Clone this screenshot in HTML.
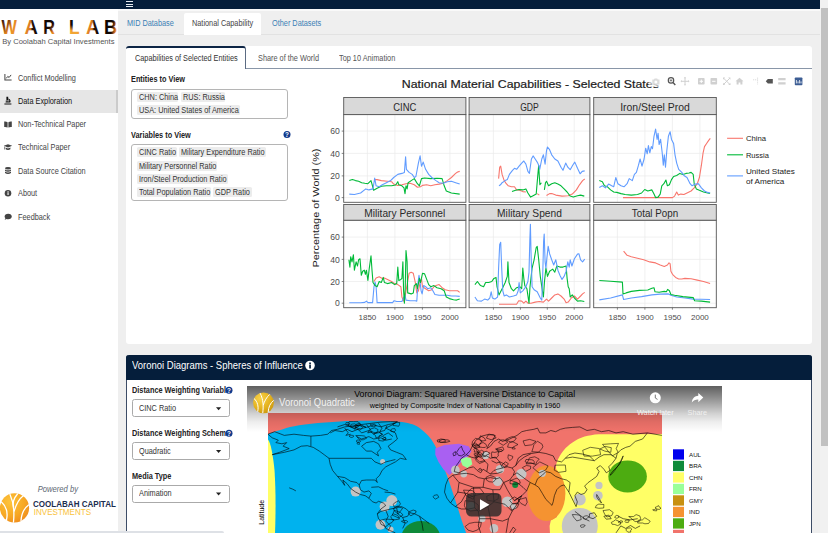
<!DOCTYPE html>
<html><head><meta charset="utf-8"><title>War Lab</title>
<style>
html,body{margin:0;padding:0}
body{width:828px;height:533px;overflow:hidden;position:relative;background:#efefef;font-family:"Liberation Sans",sans-serif;font-size:8.4px;color:#333;line-height:1}
.a{position:absolute}
.t{position:absolute;white-space:nowrap;transform-origin:0 50%;transform:scaleX(.875);line-height:10px;height:10px}
.b{font-weight:bold}
.tag{position:absolute;background:#ececec;border-radius:1.5px;height:10px}
svg{position:absolute;left:0;top:0;overflow:visible}
svg text{font-family:"Liberation Sans",sans-serif}
</style></head><body>

<!-- navbar -->
<div class="a" style="left:0;top:0;width:820px;height:8.6px;background:#051e3b"></div>
<div class="a" style="left:126px;top:1.4px;width:7.2px;height:1.1px;background:#e8edf2"></div>
<div class="a" style="left:126px;top:3.8px;width:7.2px;height:1.1px;background:#e8edf2"></div>
<div class="a" style="left:126px;top:6.1px;width:7.2px;height:1.1px;background:#e8edf2"></div>

<!-- sidebar -->
<div class="a" style="left:0;top:8.6px;width:118px;height:525px;background:#fff"></div>
<div class="a" style="left:0;top:90px;width:118px;height:22.6px;background:#e6e6e6"></div>
<div class="a" style="left:116.2px;top:90px;width:1.8px;height:22.6px;background:#cbcbcb"></div>

<!-- top tab row -->
<div class="a" style="left:118px;top:8.6px;width:702px;height:2.2px;background:#f9f9f9"></div>
<div class="a" style="left:118px;top:34px;width:702px;height:1px;background:#e2e2e2"></div>
<div class="a" style="left:183.5px;top:13.3px;width:77.5px;height:21.7px;background:#fff;border-radius:2px 2px 0 0"></div>

<!-- tab box 1 -->
<div class="a" style="left:126.3px;top:45.5px;width:685.4px;height:298.6px;background:#fff;border-radius:3px"></div>
<!-- tab box 2 -->
<div class="a" style="left:126.3px;top:354.5px;width:685.4px;height:180px;background:#fff;border-radius:3px 3px 0 0;border-left:1px solid #3c4c66;border-right:1px solid #3c4c66;box-sizing:border-box"></div>
<div class="a" style="left:126.3px;top:354.5px;width:685.4px;height:25.8px;background:#051e3b;border-radius:3px 3px 0 0"></div>


<!-- sidebar menu text -->
<div class="t" style="left:17.5px;top:72.5px;color:#444">Conflict Modelling</div>
<div class="t" style="left:17.5px;top:95.8px;color:#111">Data Exploration</div>
<div class="t" style="left:17.5px;top:119px;color:#444">Non-Technical Paper</div>
<div class="t" style="left:17.5px;top:142px;color:#444">Technical Paper</div>
<div class="t" style="left:17.5px;top:165.6px;color:#444">Data Source Citation</div>
<div class="t" style="left:17.5px;top:188.2px;color:#444">About</div>
<div class="t" style="left:17.5px;top:211.8px;color:#444">Feedback</div>

<!-- top tabs text -->
<div class="t" style="left:127px;top:18px;color:#3c7fb5">MID Database</div>
<div class="t" style="left:192px;top:18px;color:#444">National Capability</div>
<div class="t" style="left:271.7px;top:18px;color:#3c7fb5">Other Datasets</div>

<!-- tabbox 1 header -->
<div class="a" style="left:126.3px;top:68px;width:685.4px;height:1px;background:#8996a8"></div>
<div class="a" style="left:126.3px;top:45.5px;width:120.2px;height:23.5px;background:#fff;border-top:2px solid #0d2545;border-right:1.2px solid #5b6b82;border-radius:3px 3px 0 0;box-sizing:border-box"></div>
<div class="t" style="left:135px;top:52.9px;color:#333">Capabilities of Selected Entities</div>
<div class="t" style="left:257.7px;top:52.9px;color:#555">Share of the World</div>
<div class="t" style="left:339px;top:52.9px;color:#555">Top 10 Animation</div>

<!-- controls -->
<div class="t b" style="left:131.4px;top:73.6px;color:#222">Entities to View</div>
<div class="a" style="left:131.4px;top:88.7px;width:156.6px;height:30.1px;border:1px solid #b5b5b5;border-radius:3px;box-sizing:border-box;background:#fff"></div>
<div class="tag" style="left:136.9px;top:91.7px;width:41.6px"></div>
<div class="tag" style="left:181.2px;top:91.7px;width:44.3px"></div>
<div class="tag" style="left:136.9px;top:104.7px;width:102.7px"></div>
<div class="t" style="left:138.5px;top:91.7px">CHN: China</div>
<div class="t" style="left:182.8px;top:91.7px">RUS: Russia</div>
<div class="t" style="left:138.5px;top:104.7px">USA: United States of America</div>

<div class="t b" style="left:131.4px;top:129.6px;color:#222">Variables to View</div>
<div class="a" style="left:131.4px;top:144.1px;width:156.6px;height:56.9px;border:1px solid #b5b5b5;border-radius:3px;box-sizing:border-box;background:#fff"></div>
<div class="tag" style="left:136.9px;top:147.4px;width:39.7px"></div>
<div class="tag" style="left:179.3px;top:147.4px;width:86.4px"></div>
<div class="tag" style="left:136.9px;top:160.8px;width:80.1px"></div>
<div class="tag" style="left:136.9px;top:173.6px;width:90.8px"></div>
<div class="tag" style="left:136.9px;top:187px;width:73.9px"></div>
<div class="tag" style="left:213.3px;top:187px;width:38.3px"></div>
<div class="t" style="left:138.5px;top:147.4px">CINC Ratio</div>
<div class="t" style="left:180.9px;top:147.4px">Military Expenditure Ratio</div>
<div class="t" style="left:138.5px;top:160.8px">Military Personnel Ratio</div>
<div class="t" style="left:138.5px;top:173.6px">Iron/Steel Production Ratio</div>
<div class="t" style="left:138.5px;top:187px">Total Population Ratio</div>
<div class="t" style="left:214.9px;top:187px">GDP Ratio</div>

<!-- voronoi header -->
<div class="a" style="left:132.1px;top:359.3px;white-space:nowrap;color:#fff;font-size:10.1px;line-height:13px;transform-origin:0 50%;transform:scaleX(.94)">Voronoi Diagrams - Spheres of Influence</div>

<!-- voronoi controls -->
<div class="t b" style="left:132.3px;top:385px;color:#222">Distance Weighting Variabl</div>
<div class="a" style="left:132.1px;top:399.4px;width:98.4px;height:18px;border:1px solid #aaa;border-radius:2.5px;box-sizing:border-box;background:#fff"></div>
<div class="t" style="left:139.1px;top:402.8px">CINC Ratio</div>
<div class="t b" style="left:132.3px;top:428px;color:#222">Distance Weighting Schem</div>
<div class="a" style="left:132.1px;top:442.2px;width:98.4px;height:18px;border:1px solid #aaa;border-radius:2.5px;box-sizing:border-box;background:#fff"></div>
<div class="t" style="left:139.1px;top:445.6px">Quadratic</div>
<div class="t b" style="left:132.3px;top:471px;color:#222">Media Type</div>
<div class="a" style="left:132.1px;top:484.7px;width:98.4px;height:18px;border:1px solid #aaa;border-radius:2.5px;box-sizing:border-box;background:#fff"></div>
<div class="t" style="left:139.1px;top:488.1px">Animation</div>

<div class="a" style="left:0;top:531px;width:224px;height:3px;background:#dee1e6;border-top-right-radius:2px"></div>
<!-- scrollbar -->
<div class="a" style="left:820px;top:0;width:8px;height:533px;background:#f1f1f1"></div>
<div class="a" style="left:821.2px;top:8px;width:6.8px;height:438px;background:#c1c1c1"></div>

<svg width="828" height="533" viewBox="0 0 828 533">


<defs>
<linearGradient id="gW" x1="0" y1="0" x2="1" y2="1"><stop offset="0" stop-color="#1a0d05"/><stop offset=".3" stop-color="#7a3a0c"/><stop offset=".55" stop-color="#e88a22"/><stop offset="1" stop-color="#f0a030"/></linearGradient>
<linearGradient id="gA" x1="0" y1="0" x2="1" y2="0"><stop offset="0" stop-color="#e8892a"/><stop offset=".45" stop-color="#d87a20"/><stop offset=".6" stop-color="#2a1206"/><stop offset="1" stop-color="#0a0503"/></linearGradient>
<linearGradient id="gR" x1="0" y1="0" x2=".6" y2="1"><stop offset="0" stop-color="#0a0503"/><stop offset=".6" stop-color="#1a0a04"/><stop offset=".85" stop-color="#d9781e"/><stop offset="1" stop-color="#f0a030"/></linearGradient>
<linearGradient id="gL" x1="0" y1="0" x2="0" y2="1"><stop offset="0" stop-color="#0a0503"/><stop offset=".4" stop-color="#1a0a04"/><stop offset=".65" stop-color="#f0a030"/><stop offset="1" stop-color="#f6b040"/></linearGradient>
<linearGradient id="gB" x1="0" y1="0" x2="1" y2=".3"><stop offset="0" stop-color="#0a0503"/><stop offset=".7" stop-color="#120804"/><stop offset=".9" stop-color="#b05a18"/><stop offset="1" stop-color="#e08a30"/></linearGradient>
<radialGradient id="gLogo" cx=".35" cy=".3" r=".8"><stop offset="0" stop-color="#fdc43c"/><stop offset=".6" stop-color="#f7a823"/><stop offset="1" stop-color="#ef8a1c"/></radialGradient>
<radialGradient id="gLogo2" cx=".35" cy=".3" r=".8"><stop offset="0" stop-color="#f9d34a"/><stop offset=".6" stop-color="#e4b21e"/><stop offset="1" stop-color="#c8960f"/></radialGradient>
<linearGradient id="gYT" x1="0" y1="0" x2="0" y2="1"><stop offset="0" stop-color="#000" stop-opacity=".63"/><stop offset=".24" stop-color="#000" stop-opacity=".455"/><stop offset=".6" stop-color="#000" stop-opacity=".18"/><stop offset=".78" stop-color="#000" stop-opacity=".07"/><stop offset="1" stop-color="#000" stop-opacity="0"/></linearGradient>
<clipPath id="cMap"><rect x="268" y="413" width="394" height="121"/></clipPath>
<clipPath id="cVid"><rect x="247" y="386" width="475" height="148"/></clipPath>
</defs>

<!-- WAR LAB logo -->
<g font-weight="bold" font-size="19.4">
<text transform="translate(1.6,34) scale(.84,1)" fill="url(#gW)">W</text>
<text transform="translate(24.4,34) scale(.95,1)" fill="url(#gA)">A</text>
<text transform="translate(43.2,34) scale(.84,1)" fill="url(#gR)">R</text>
<text transform="translate(68.9,34) scale(.9,1)" fill="url(#gL)">L</text>
<text transform="translate(86,34) scale(.95,1)" fill="url(#gA)">A</text>
<text transform="translate(103.9,34) scale(.94,1)" fill="url(#gB)">B</text>
</g>
<text x="2.2" y="43.9" font-size="7" fill="#555" textLength="112.3" lengthAdjust="spacingAndGlyphs">By Coolabah Capital Investments</text>

<!-- powered by -->
<text x="37.7" y="491.6" font-size="8.4" font-style="italic" fill="#5d6873" textLength="40.3" lengthAdjust="spacingAndGlyphs">Powered by</text>
<circle cx="14.5" cy="507.9" r="14.6" fill="url(#gLogo)"/>
<g fill="none" stroke="#fff" stroke-width="1.3" stroke-linecap="round">
<path d="M13.5,522 C14.5,512 14.5,504 10,494.5"/>
<path d="M14.2,511 C16,505 19,499 23,496"/>
<path d="M6.5,520 C8,513 6,506 1.5,502"/>
<path d="M21,520.5 C21.5,514 24,508.5 28.5,505"/>
<path d="M13.6,507 C12.5,503 14,498 17.5,494"/>
</g>
<text x="33" y="507.4" font-size="9.5" font-weight="bold" fill="#1b2d4f" textLength="82.9" lengthAdjust="spacingAndGlyphs">COOLABAH CAPITAL</text>
<text x="33.8" y="515.3" font-size="8.4" fill="#f9c23a" textLength="57.2" lengthAdjust="spacingAndGlyphs">INVESTMENTS</text>

<!-- sidebar icons -->
<g fill="#444" stroke="none">
<!-- chart-line -->
<path d="M4.4,74 h1 v5.4 h6.2 v1 h-7.2z"/>
<path d="M6.2,78.4 l1.6,-2 l1.3,1.1 l2,-2.6" fill="none" stroke="#444" stroke-width="1"/>
<!-- microscope -->
<path d="M4.4,103.4 h7 v1 h-7z" fill="#111"/>
<path d="M6.4,96.8 h1.8 v3.2 h-1.8z M5.8,100.4 h3 v1 h-3z M8.4,98.6 c2.2,0.4 2.6,2.8 1.8,4 h-4.6 v-0.8 h3.4 c0.6,-0.8 0.2,-2 -0.6,-2.2z" fill="#111"/>
<!-- book-open -->
<path d="M4.2,121.6 c1.2,-0.2 2.4,0 3.4,0.6 v5.4 c-1,-0.6 -2.2,-0.8 -3.4,-0.6z M11.8,121.6 c-1.2,-0.2 -2.4,0 -3.4,0.6 v5.4 c1,-0.6 2.2,-0.8 3.4,-0.6z"/>
<!-- graduation-cap -->
<path d="M8,144.2 l4.2,1.6 l-4.2,1.6 l-4.2,-1.6z M5.6,147.6 l2.4,0.9 l2.4,-0.9 v1.6 c-1.4,0.9 -3.4,0.9 -4.8,0z M4.4,146.4 h0.6 v3 h-0.6z"/>
<!-- database -->
<ellipse cx="8" cy="168.2" rx="3" ry="1.2"/>
<path d="M5,169.4 c1.6,1.2 4.4,1.2 6,0 v1.4 c-1.6,1.2 -4.4,1.2 -6,0z M5,171.6 c1.6,1.2 4.4,1.2 6,0 v1.4 c-1.6,1.2 -4.4,1.2 -6,0z"/>
<!-- info-circle -->
<circle cx="8" cy="193.3" r="3.3"/>
<path d="M7.5,192.6 h1.1 v2.5 h-1.1z M7.5,191.2 h1.1 v1 h-1.1z" fill="#fff"/>
<!-- comment -->
<path d="M8.2,213.8 c2.2,0 3.6,1.2 3.6,2.7 s-1.4,2.7 -3.6,2.7 c-0.6,0 -1.2,-0.1 -1.6,-0.3 c-0.6,0.5 -1.3,0.7 -2,0.7 c0.5,-0.5 0.7,-1 0.8,-1.5 c-0.5,-0.4 -0.8,-1 -0.8,-1.6 c0,-1.5 1.4,-2.7 3.6,-2.7z"/>
</g>

<!-- help icons -->
<g>
<circle cx="287" cy="134.6" r="3.5" fill="#123a8c"/>
<text x="287" y="137" font-size="6.4" font-weight="bold" fill="#fff" text-anchor="middle">?</text>
<circle cx="229" cy="390.2" r="3.5" fill="#123a8c"/>
<text x="229" y="392.6" font-size="6.4" font-weight="bold" fill="#fff" text-anchor="middle">?</text>
<circle cx="229" cy="433.2" r="3.5" fill="#123a8c"/>
<text x="229" y="435.6" font-size="6.4" font-weight="bold" fill="#fff" text-anchor="middle">?</text>
<circle cx="310" cy="365.5" r="4.8" fill="#fff"/>
<path d="M309.2,364.6 h1.7 v3.8 h-1.7z M309.2,362.4 h1.7 v1.5 h-1.7z" fill="#051e3b"/>
</g>
<!-- dropdown arrows -->
<g fill="#222">
<path d="M216,407.3 h5.2 l-2.6,2.9z"/>
<path d="M216,450.1 h5.2 l-2.6,2.9z"/>
<path d="M216,492.6 h5.2 l-2.6,2.9z"/>
</g>



<!-- chart title -->
<text x="401.8" y="87.5" font-size="11.5" fill="#1c1c1c" stroke="#1c1c1c" stroke-width=".2" textLength="257" lengthAdjust="spacingAndGlyphs">National Material Capabilities - Selected States</text>
<text transform="translate(318.6,208) rotate(-90)" text-anchor="middle" font-size="9.5" fill="#222" textLength="119" lengthAdjust="spacingAndGlyphs">Percentage of World (%)</text>
<!-- legend -->
<line x1="727.1" y1="138.3" x2="743" y2="138.3" stroke="#F8766D" stroke-width="1.1"/>
<line x1="727.1" y1="154.8" x2="743" y2="154.8" stroke="#00BA38" stroke-width="1.1"/>
<line x1="727.1" y1="175.9" x2="743" y2="175.9" stroke="#619CFF" stroke-width="1.1"/>
<text x="745.9" y="141.4" font-size="7.6" fill="#222" textLength="20.1" lengthAdjust="spacingAndGlyphs">China</text>
<text x="745.9" y="157.9" font-size="7.6" fill="#222" textLength="23" lengthAdjust="spacingAndGlyphs">Russia</text>
<text x="745.9" y="173.9" font-size="7.6" fill="#222" textLength="49" lengthAdjust="spacingAndGlyphs">United States</text>
<text x="745.9" y="183.5" font-size="7.6" fill="#222" textLength="38.5" lengthAdjust="spacingAndGlyphs">of America</text>
<rect x="343.7" y="114.6" width="122.2" height="87.7" fill="#fff"/>
<line x1="367.4" y1="114.6" x2="367.4" y2="202.3" stroke="#ebebeb" stroke-width="0.7"/>
<line x1="394.9" y1="114.6" x2="394.9" y2="202.3" stroke="#ebebeb" stroke-width="0.7"/>
<line x1="422.4" y1="114.6" x2="422.4" y2="202.3" stroke="#ebebeb" stroke-width="0.7"/>
<line x1="449.9" y1="114.6" x2="449.9" y2="202.3" stroke="#ebebeb" stroke-width="0.7"/>
<line x1="343.7" y1="131.1" x2="465.9" y2="131.1" stroke="#ebebeb" stroke-width="0.7"/>
<line x1="343.7" y1="153.4" x2="465.9" y2="153.4" stroke="#ebebeb" stroke-width="0.7"/>
<line x1="343.7" y1="175.9" x2="465.9" y2="175.9" stroke="#ebebeb" stroke-width="0.7"/>
<line x1="343.7" y1="197.6" x2="465.9" y2="197.6" stroke="#ebebeb" stroke-width="0.7"/>
<polyline fill="none" stroke="#F8766D" stroke-width="1.1" stroke-linejoin="round" points="374.0,179.6 377.1,179.6 381.3,180.6 387.5,181.3 391.6,181.7 393.7,184.1 397.8,185.4 401.9,184.8 406.0,183.7 410.2,183.3 414.3,184.8 417.4,187.2 420.5,186.8 422.5,185.4 426.7,184.8 430.8,185.8 434.9,184.8 439.1,184.1 443.2,183.3 447.3,180.6 451.4,177.5 455.6,173.4 457.6,172.0 459.7,171.4"/>
<polyline fill="none" stroke="#00BA38" stroke-width="1.1" stroke-linejoin="round" points="349.3,180.6 352.4,179.6 355.5,180.6 358.6,181.3 361.7,182.7 364.8,183.3 367.9,183.7 371.0,180.6 372.0,184.1 373.6,190.3 377.1,188.3 381.3,186.2 386.4,185.8 391.6,185.8 395.7,185.0 397.8,181.7 398.8,184.8 401.9,185.8 404.0,187.9 405.0,193.6 406.0,185.8 407.1,188.9 408.1,182.7 411.2,180.6 414.3,178.6 417.4,183.7 419.4,185.8 421.5,178.6 424.6,178.0 430.8,178.6 437.0,178.2 442.1,178.6 444.2,185.8 446.3,191.0 451.4,193.0 459.7,194.1"/>
<polyline fill="none" stroke="#619CFF" stroke-width="1.1" stroke-linejoin="round" points="349.3,194.1 354.4,194.5 360.6,193.0 365.8,188.9 368.9,189.9 373.0,188.9 374.7,178.0 376.1,185.8 379.2,186.8 382.3,184.8 386.4,182.7 390.6,180.6 393.7,177.5 397.8,174.4 401.9,173.4 404.4,172.4 405.6,156.9 406.4,169.3 409.1,172.4 412.2,174.4 414.3,177.5 415.9,176.5 418.4,163.1 420.1,155.9 421.5,166.2 423.2,162.1 425.6,169.3 428.7,174.4 431.8,177.5 436.0,180.6 439.1,182.7 443.2,183.3 447.3,181.7 451.4,181.3 455.6,182.7 459.7,184.1"/>
<rect x="343.7" y="114.6" width="122.2" height="87.7" fill="none" stroke="#555" stroke-width="0.9"/>
<rect x="343.7" y="97.5" width="122.2" height="17.1" fill="#d9d9d9" stroke="#555" stroke-width="0.9"/>
<text x="404.8" y="110.6" text-anchor="middle" font-size="10.2" fill="#2a2a2a" textLength="23.1" lengthAdjust="spacingAndGlyphs">CINC</text>
<line x1="341.7" y1="131.1" x2="343.7" y2="131.1" stroke="#555" stroke-width="0.7"/>
<text x="339.7" y="134.2" text-anchor="end" font-size="8.6" fill="#4d4d4d">60</text>
<line x1="341.7" y1="153.4" x2="343.7" y2="153.4" stroke="#555" stroke-width="0.7"/>
<text x="339.7" y="156.5" text-anchor="end" font-size="8.6" fill="#4d4d4d">40</text>
<line x1="341.7" y1="175.9" x2="343.7" y2="175.9" stroke="#555" stroke-width="0.7"/>
<text x="339.7" y="179.0" text-anchor="end" font-size="8.6" fill="#4d4d4d">20</text>
<line x1="341.7" y1="197.6" x2="343.7" y2="197.6" stroke="#555" stroke-width="0.7"/>
<text x="339.7" y="200.7" text-anchor="end" font-size="8.6" fill="#4d4d4d">0</text>
<rect x="469.1" y="114.6" width="120.8" height="87.7" fill="#fff"/>
<line x1="493.4" y1="114.6" x2="493.4" y2="202.3" stroke="#ebebeb" stroke-width="0.7"/>
<line x1="520.4" y1="114.6" x2="520.4" y2="202.3" stroke="#ebebeb" stroke-width="0.7"/>
<line x1="547.3" y1="114.6" x2="547.3" y2="202.3" stroke="#ebebeb" stroke-width="0.7"/>
<line x1="574.2" y1="114.6" x2="574.2" y2="202.3" stroke="#ebebeb" stroke-width="0.7"/>
<line x1="469.1" y1="131.1" x2="589.9" y2="131.1" stroke="#ebebeb" stroke-width="0.7"/>
<line x1="469.1" y1="153.4" x2="589.9" y2="153.4" stroke="#ebebeb" stroke-width="0.7"/>
<line x1="469.1" y1="175.9" x2="589.9" y2="175.9" stroke="#ebebeb" stroke-width="0.7"/>
<line x1="469.1" y1="197.6" x2="589.9" y2="197.6" stroke="#ebebeb" stroke-width="0.7"/>
<polyline fill="none" stroke="#F8766D" stroke-width="1.1" stroke-linejoin="round" points="498.6,178.6 499.7,167.2 500.7,166.2 502.1,174.4 504.2,180.6 506.3,183.7 508.3,185.8 511.4,186.8 514.5,186.8 516.6,189.9 519.7,190.3 522.8,191.6 525.9,192.0"/>
<polyline fill="none" stroke="#F8766D" stroke-width="1.1" stroke-linejoin="round" points="537.2,193.6 539.3,195.1"/>
<polyline fill="none" stroke="#F8766D" stroke-width="1.1" stroke-linejoin="round" points="546.5,195.5 549.6,193.6 551.7,193.6 555.8,195.1 562.0,196.1 568.2,195.7 572.3,194.1 576.4,189.9 579.5,184.8 582.6,180.6 584.7,179.0"/>
<polyline fill="none" stroke="#00BA38" stroke-width="1.1" stroke-linejoin="round" points="512.0,191.6 515.6,190.3 519.1,189.5 522.8,189.9 525.9,188.9 527.9,193.0 530.6,197.1 533.1,195.7 536.2,194.1 537.6,177.5 538.7,165.2 539.3,176.5 539.9,184.8 541.4,182.7"/>
<polyline fill="none" stroke="#00BA38" stroke-width="1.1" stroke-linejoin="round" points="544.4,189.9 545.5,182.7 546.5,181.3 548.6,185.8 551.7,183.7 554.8,182.7 557.9,184.1 561.0,185.8 564.1,188.9 567.1,192.0 570.2,196.1 573.3,197.1 577.5,195.7 580.6,195.1 584.3,196.1"/>
<polyline fill="none" stroke="#619CFF" stroke-width="1.1" stroke-linejoin="round" points="499.0,185.8 500.5,184.8 502.1,182.7 505.2,180.6 507.3,179.6 509.4,174.4 512.5,170.3 514.5,168.3 516.6,169.3 519.1,166.2 521.7,163.1 523.8,161.0 525.9,164.1 527.9,171.4 529.4,173.4 531.4,159.0 533.1,155.9 535.2,159.0 537.2,162.1 538.7,165.2 539.7,169.3 541.8,159.0 543.4,154.8 545.1,164.1 546.5,150.7 547.5,147.0 549.6,149.7 551.7,154.8 554.8,159.0 557.9,161.0 561.0,167.2 563.0,170.3 565.7,163.1 567.8,167.2 570.2,169.7 572.7,165.2 574.8,162.1 577.5,168.3 580.1,173.8 582.2,171.4 584.7,170.9"/>
<rect x="469.1" y="114.6" width="120.8" height="87.7" fill="none" stroke="#555" stroke-width="0.9"/>
<rect x="469.1" y="97.5" width="120.8" height="17.1" fill="#d9d9d9" stroke="#555" stroke-width="0.9"/>
<text x="529.5" y="110.6" text-anchor="middle" font-size="10.2" fill="#2a2a2a" textLength="18.6" lengthAdjust="spacingAndGlyphs">GDP</text>
<rect x="593.7" y="114.6" width="122.6" height="87.7" fill="#fff"/>
<line x1="617.4" y1="114.6" x2="617.4" y2="202.3" stroke="#ebebeb" stroke-width="0.7"/>
<line x1="644.9" y1="114.6" x2="644.9" y2="202.3" stroke="#ebebeb" stroke-width="0.7"/>
<line x1="672.4" y1="114.6" x2="672.4" y2="202.3" stroke="#ebebeb" stroke-width="0.7"/>
<line x1="699.9" y1="114.6" x2="699.9" y2="202.3" stroke="#ebebeb" stroke-width="0.7"/>
<line x1="593.7" y1="131.1" x2="716.3" y2="131.1" stroke="#ebebeb" stroke-width="0.7"/>
<line x1="593.7" y1="153.4" x2="716.3" y2="153.4" stroke="#ebebeb" stroke-width="0.7"/>
<line x1="593.7" y1="175.9" x2="716.3" y2="175.9" stroke="#ebebeb" stroke-width="0.7"/>
<line x1="593.7" y1="197.6" x2="716.3" y2="197.6" stroke="#ebebeb" stroke-width="0.7"/>
<polyline fill="none" stroke="#F8766D" stroke-width="1.1" stroke-linejoin="round" points="623.0,197.6 672.5,197.6 674.6,196.1 676.7,192.0 678.3,195.1 680.8,194.1 683.9,194.5 687.0,193.0 691.1,191.0 694.2,187.9 697.3,183.7 699.4,177.5 701.4,165.2 703.1,152.8 704.5,146.6 706.6,143.5 708.7,140.4 710.3,138.3"/>
<polyline fill="none" stroke="#00BA38" stroke-width="1.1" stroke-linejoin="round" points="599.3,180.6 602.4,181.7 604.4,185.8 607.5,186.8 610.6,189.9 613.7,192.0 616.8,192.4 621.0,193.6 625.1,194.5 631.3,195.1 637.5,194.5 641.6,193.0 644.7,189.5 647.8,191.0 651.9,189.9 654.0,194.1 655.6,197.6 658.1,197.1 660.2,194.1 661.8,185.8 663.9,183.7 665.9,180.0 667.4,185.8 669.4,184.8 671.5,179.6 673.6,176.5 676.7,175.5 679.8,173.4 682.9,174.4 686.0,173.4 689.1,173.0 691.1,172.4 693.2,174.4 694.2,183.7 696.3,188.9 699.4,190.3 703.5,192.0 707.6,193.0 710.1,193.4"/>
<polyline fill="none" stroke="#619CFF" stroke-width="1.1" stroke-linejoin="round" points="599.3,187.4 602.4,185.8 605.5,187.9 608.6,184.1 611.7,185.8 613.7,186.8 615.8,177.5 617.9,183.7 621.0,185.8 624.0,186.8 627.1,183.7 629.2,178.6 632.3,180.6 634.4,174.4 636.4,172.4 638.5,165.2 640.1,159.0 642.0,166.2 644.1,159.0 645.7,148.2 647.2,153.8 648.4,145.6 649.8,152.8 651.3,146.6 652.5,148.7 654.0,136.3 655.6,129.0 657.1,139.4 658.1,133.2 659.1,144.5 660.6,139.4 662.2,152.8 663.3,165.2 664.3,154.8 665.5,167.2 666.8,150.7 668.4,136.3 670.1,131.7 671.5,139.4 673.6,143.5 675.0,154.8 676.7,163.1 678.7,169.3 681.8,172.4 683.9,175.5 687.0,177.5 690.1,183.7 692.1,185.8 695.2,184.1 698.3,183.7 701.4,187.9 704.5,191.0 707.6,192.4 710.1,193.0"/>
<rect x="593.7" y="114.6" width="122.6" height="87.7" fill="none" stroke="#555" stroke-width="0.9"/>
<rect x="593.7" y="97.5" width="122.6" height="17.1" fill="#d9d9d9" stroke="#555" stroke-width="0.9"/>
<text x="655.0" y="110.6" text-anchor="middle" font-size="10.2" fill="#2a2a2a" textLength="69.6" lengthAdjust="spacingAndGlyphs">Iron/Steel Prod</text>
<rect x="343.7" y="220.2" width="122.2" height="87.5" fill="#fff"/>
<line x1="367.4" y1="220.2" x2="367.4" y2="307.7" stroke="#ebebeb" stroke-width="0.7"/>
<line x1="394.9" y1="220.2" x2="394.9" y2="307.7" stroke="#ebebeb" stroke-width="0.7"/>
<line x1="422.4" y1="220.2" x2="422.4" y2="307.7" stroke="#ebebeb" stroke-width="0.7"/>
<line x1="449.9" y1="220.2" x2="449.9" y2="307.7" stroke="#ebebeb" stroke-width="0.7"/>
<line x1="343.7" y1="237.1" x2="465.9" y2="237.1" stroke="#ebebeb" stroke-width="0.7"/>
<line x1="343.7" y1="259.4" x2="465.9" y2="259.4" stroke="#ebebeb" stroke-width="0.7"/>
<line x1="343.7" y1="281.5" x2="465.9" y2="281.5" stroke="#ebebeb" stroke-width="0.7"/>
<line x1="343.7" y1="303.2" x2="465.9" y2="303.2" stroke="#ebebeb" stroke-width="0.7"/>
<polyline fill="none" stroke="#F8766D" stroke-width="1.1" stroke-linejoin="round" points="374.0,281.5 376.1,278.0 379.2,276.8 382.3,278.4 384.4,278.0 387.5,279.4 391.6,281.5 394.7,283.6 397.8,284.6 400.9,286.7 401.9,297.0 403.6,301.1 405.0,297.0 407.1,284.6 409.1,273.3 411.2,272.2 413.3,273.3 415.3,282.5 416.8,292.9 418.4,290.8 420.1,282.5 421.5,279.4 422.5,286.7 425.6,288.7 428.7,290.8 431.8,289.8 433.9,286.7 436.0,285.6 439.1,284.6 442.1,287.7 445.2,289.8 449.4,290.8 453.5,290.8 457.6,290.8 459.7,292.4"/>
<polyline fill="none" stroke="#619CFF" stroke-width="1.1" stroke-linejoin="round" points="349.3,302.8 360.6,302.8 364.8,302.4 366.4,301.1 367.9,302.6 372.6,302.6 374.0,286.7 375.1,282.1 376.1,286.7 377.1,302.6 392.6,302.6 394.1,300.7 396.7,301.5 401.9,301.5 404.0,297.0 405.0,294.9 406.0,300.1 410.2,300.7 415.3,300.7 416.8,301.1 418.0,282.5 419.0,275.3 420.1,282.5 421.1,290.8 422.1,293.9 423.6,285.6 425.6,286.7 427.7,288.7 430.8,287.7 432.9,290.8 434.9,294.5 439.1,295.3 443.2,295.3 447.3,295.3 451.4,296.0 455.6,296.0 459.7,296.4"/>
<polyline fill="none" stroke="#00BA38" stroke-width="1.1" stroke-linejoin="round" points="348.9,259.8 349.9,267.1 350.7,256.7 352.0,261.9 353.4,254.7 354.4,270.2 356.1,261.9 357.5,266.0 358.6,259.8 360.0,258.8 361.3,275.3 362.7,271.2 364.3,270.2 365.4,274.3 366.4,270.2 367.9,280.5 369.3,268.1 371.0,255.7 372.0,270.2 373.0,282.5 375.1,285.6 377.1,286.7 379.2,281.5 381.3,282.5 383.3,277.4 384.4,282.5 387.5,283.6 391.6,282.5 394.7,284.6 396.7,283.6 397.8,267.1 398.8,280.5 400.9,279.4 401.9,278.4 402.9,261.9 403.6,290.8 404.4,303.2 405.2,288.7 406.0,250.6 407.1,261.9 407.7,292.9 411.2,293.9 413.3,292.9 414.3,285.6 416.4,283.6 417.4,288.7 419.4,278.4 420.5,282.5 422.5,273.3 424.6,273.9 426.7,279.4 428.7,284.6 430.8,286.7 433.9,285.6 437.0,287.7 441.1,288.7 444.2,290.8 446.3,297.0 449.4,298.6 453.5,299.7 456.6,300.1 459.7,299.1"/>
<rect x="343.7" y="220.2" width="122.2" height="87.5" fill="none" stroke="#555" stroke-width="0.9"/>
<rect x="343.7" y="204.5" width="122.2" height="15.7" fill="#d9d9d9" stroke="#555" stroke-width="0.9"/>
<text x="404.8" y="216.9" text-anchor="middle" font-size="10.2" fill="#2a2a2a" textLength="80.9" lengthAdjust="spacingAndGlyphs">Military Personnel</text>
<line x1="367.4" y1="307.7" x2="367.4" y2="309.7" stroke="#555" stroke-width="0.7"/>
<text x="367.4" y="320.0" text-anchor="middle" font-size="8" fill="#4d4d4d">1850</text>
<line x1="394.9" y1="307.7" x2="394.9" y2="309.7" stroke="#555" stroke-width="0.7"/>
<text x="394.9" y="320.0" text-anchor="middle" font-size="8" fill="#4d4d4d">1900</text>
<line x1="422.4" y1="307.7" x2="422.4" y2="309.7" stroke="#555" stroke-width="0.7"/>
<text x="422.4" y="320.0" text-anchor="middle" font-size="8" fill="#4d4d4d">1950</text>
<line x1="449.9" y1="307.7" x2="449.9" y2="309.7" stroke="#555" stroke-width="0.7"/>
<text x="449.9" y="320.0" text-anchor="middle" font-size="8" fill="#4d4d4d">2000</text>
<line x1="341.7" y1="237.1" x2="343.7" y2="237.1" stroke="#555" stroke-width="0.7"/>
<text x="339.7" y="240.2" text-anchor="end" font-size="8.6" fill="#4d4d4d">60</text>
<line x1="341.7" y1="259.4" x2="343.7" y2="259.4" stroke="#555" stroke-width="0.7"/>
<text x="339.7" y="262.5" text-anchor="end" font-size="8.6" fill="#4d4d4d">40</text>
<line x1="341.7" y1="281.5" x2="343.7" y2="281.5" stroke="#555" stroke-width="0.7"/>
<text x="339.7" y="284.6" text-anchor="end" font-size="8.6" fill="#4d4d4d">20</text>
<line x1="341.7" y1="303.2" x2="343.7" y2="303.2" stroke="#555" stroke-width="0.7"/>
<text x="339.7" y="306.3" text-anchor="end" font-size="8.6" fill="#4d4d4d">0</text>
<rect x="469.1" y="220.2" width="120.8" height="87.5" fill="#fff"/>
<line x1="493.4" y1="220.2" x2="493.4" y2="307.7" stroke="#ebebeb" stroke-width="0.7"/>
<line x1="520.4" y1="220.2" x2="520.4" y2="307.7" stroke="#ebebeb" stroke-width="0.7"/>
<line x1="547.3" y1="220.2" x2="547.3" y2="307.7" stroke="#ebebeb" stroke-width="0.7"/>
<line x1="574.2" y1="220.2" x2="574.2" y2="307.7" stroke="#ebebeb" stroke-width="0.7"/>
<line x1="469.1" y1="237.1" x2="589.9" y2="237.1" stroke="#ebebeb" stroke-width="0.7"/>
<line x1="469.1" y1="259.4" x2="589.9" y2="259.4" stroke="#ebebeb" stroke-width="0.7"/>
<line x1="469.1" y1="281.5" x2="589.9" y2="281.5" stroke="#ebebeb" stroke-width="0.7"/>
<line x1="469.1" y1="303.2" x2="589.9" y2="303.2" stroke="#ebebeb" stroke-width="0.7"/>
<polyline fill="none" stroke="#F8766D" stroke-width="1.1" stroke-linejoin="round" points="499.0,304.2 516.6,304.2 518.7,300.7 521.7,301.1 523.8,303.2 525.9,301.1 527.9,303.2 531.0,303.2 535.2,302.1 539.3,301.5 543.4,302.1 546.5,299.1 548.6,301.1 551.7,298.0 554.8,294.9 557.9,293.9 561.0,296.0 564.1,299.1 566.1,302.8 568.2,302.1 571.3,298.0 574.4,296.0 577.5,299.1 580.6,296.0 582.6,293.9 584.7,292.4"/>
<polyline fill="none" stroke="#00BA38" stroke-width="1.1" stroke-linejoin="round" points="474.9,284.6 477.4,281.5 480.5,285.6 483.6,286.7 485.6,282.5 488.7,282.5 491.8,281.5 493.9,278.4 496.0,277.4 497.0,286.7 499.0,294.9 501.1,290.8 503.2,286.7 505.2,282.5 507.3,276.4 507.9,261.9 509.0,282.5 511.4,288.7 513.5,290.8 516.6,287.7 519.7,286.7 521.7,288.7 522.8,268.1 523.8,278.4 524.8,285.6 526.9,288.7 529.0,303.2 530.0,286.7 532.1,268.1 534.1,259.8 536.2,247.5 537.2,246.4 538.7,259.8 540.3,276.4 542.4,290.8 543.4,297.0 544.4,282.5 545.9,268.1 547.5,276.4 549.6,271.2 552.7,269.1 554.8,272.2 556.8,266.0 559.9,267.1 563.0,267.1 566.1,266.0 567.1,278.4 568.2,286.7 569.2,288.7 570.2,297.0 572.3,294.9 574.4,298.0 577.5,301.1 580.6,300.7 584.3,301.5"/>
<polyline fill="none" stroke="#619CFF" stroke-width="1.1" stroke-linejoin="round" points="474.9,297.0 477.4,300.7 481.5,301.1 484.6,299.1 487.7,300.1 489.8,298.0 491.2,291.8 492.4,298.0 494.9,299.1 497.6,297.0 498.6,268.1 499.7,244.4 500.7,242.3 501.7,268.1 502.8,290.8 504.2,296.0 506.3,294.9 509.4,297.0 513.5,296.0 516.6,294.9 518.2,290.8 519.1,282.5 520.3,292.9 522.8,290.8 525.9,286.7 527.9,281.5 529.0,272.2 529.8,241.3 530.4,224.3 531.0,251.6 532.1,286.7 534.1,289.8 537.2,291.8 540.3,298.0 541.8,300.1 542.8,272.2 543.6,241.3 544.2,234.0 545.1,261.9 545.9,268.1 546.9,257.8 548.2,246.4 549.6,253.7 551.7,259.8 553.7,265.0 555.8,259.8 557.9,270.2 559.9,275.3 562.0,279.4 564.1,276.4 566.1,271.2 567.8,261.9 569.2,267.1 570.2,259.8 571.9,266.0 574.4,258.8 577.5,254.1 578.9,253.7 580.6,259.8 582.6,261.9 584.7,259.2"/>
<rect x="469.1" y="220.2" width="120.8" height="87.5" fill="none" stroke="#555" stroke-width="0.9"/>
<rect x="469.1" y="204.5" width="120.8" height="15.7" fill="#d9d9d9" stroke="#555" stroke-width="0.9"/>
<text x="529.5" y="216.9" text-anchor="middle" font-size="10.2" fill="#2a2a2a" textLength="64.8" lengthAdjust="spacingAndGlyphs">Military Spend</text>
<line x1="493.4" y1="307.7" x2="493.4" y2="309.7" stroke="#555" stroke-width="0.7"/>
<text x="493.4" y="320.0" text-anchor="middle" font-size="8" fill="#4d4d4d">1850</text>
<line x1="520.4" y1="307.7" x2="520.4" y2="309.7" stroke="#555" stroke-width="0.7"/>
<text x="520.4" y="320.0" text-anchor="middle" font-size="8" fill="#4d4d4d">1900</text>
<line x1="547.3" y1="307.7" x2="547.3" y2="309.7" stroke="#555" stroke-width="0.7"/>
<text x="547.3" y="320.0" text-anchor="middle" font-size="8" fill="#4d4d4d">1950</text>
<line x1="574.2" y1="307.7" x2="574.2" y2="309.7" stroke="#555" stroke-width="0.7"/>
<text x="574.2" y="320.0" text-anchor="middle" font-size="8" fill="#4d4d4d">2000</text>
<rect x="593.7" y="220.2" width="122.6" height="87.5" fill="#fff"/>
<line x1="617.4" y1="220.2" x2="617.4" y2="307.7" stroke="#ebebeb" stroke-width="0.7"/>
<line x1="644.9" y1="220.2" x2="644.9" y2="307.7" stroke="#ebebeb" stroke-width="0.7"/>
<line x1="672.4" y1="220.2" x2="672.4" y2="307.7" stroke="#ebebeb" stroke-width="0.7"/>
<line x1="699.9" y1="220.2" x2="699.9" y2="307.7" stroke="#ebebeb" stroke-width="0.7"/>
<line x1="593.7" y1="237.1" x2="716.3" y2="237.1" stroke="#ebebeb" stroke-width="0.7"/>
<line x1="593.7" y1="259.4" x2="716.3" y2="259.4" stroke="#ebebeb" stroke-width="0.7"/>
<line x1="593.7" y1="281.5" x2="716.3" y2="281.5" stroke="#ebebeb" stroke-width="0.7"/>
<line x1="593.7" y1="303.2" x2="716.3" y2="303.2" stroke="#ebebeb" stroke-width="0.7"/>
<polyline fill="none" stroke="#F8766D" stroke-width="1.1" stroke-linejoin="round" points="623.6,251.2 627.1,255.3 631.3,256.7 637.5,258.2 643.7,259.8 649.8,261.9 655.6,262.9 660.2,265.0 664.3,266.4 667.4,265.0 669.0,262.9 670.1,263.6 670.9,271.2 672.5,274.3 675.6,277.4 678.7,279.0 681.8,279.0 684.9,278.4 691.1,278.8 697.3,280.1 703.5,281.5 710.1,283.6"/>
<polyline fill="none" stroke="#619CFF" stroke-width="1.1" stroke-linejoin="round" points="599.3,299.9 610.6,298.0 622.4,294.9 623.6,299.5 631.3,298.0 641.6,296.6 651.9,294.9 660.2,294.1 668.4,293.9 670.9,295.3 676.7,297.0 684.9,298.0 693.2,299.1 701.4,299.3 710.1,299.5"/>
<polyline fill="none" stroke="#00BA38" stroke-width="1.1" stroke-linejoin="round" points="599.3,280.5 610.6,281.3 622.4,282.1 623.0,293.9 626.1,292.9 631.3,291.4 639.5,290.4 647.8,290.0 651.9,288.3 654.0,287.7 655.0,291.8 659.1,292.2 664.3,291.4 666.4,291.8 667.6,289.4 669.4,290.8 670.9,294.5 674.6,295.3 682.9,296.6 693.2,297.6 694.6,300.7 701.4,301.1 710.1,302.1"/>
<rect x="593.7" y="220.2" width="122.6" height="87.5" fill="none" stroke="#555" stroke-width="0.9"/>
<rect x="593.7" y="204.5" width="122.6" height="15.7" fill="#d9d9d9" stroke="#555" stroke-width="0.9"/>
<text x="655.0" y="216.9" text-anchor="middle" font-size="10.2" fill="#2a2a2a" textLength="46.4" lengthAdjust="spacingAndGlyphs">Total Popn</text>
<line x1="617.4" y1="307.7" x2="617.4" y2="309.7" stroke="#555" stroke-width="0.7"/>
<text x="617.4" y="320.0" text-anchor="middle" font-size="8" fill="#4d4d4d">1850</text>
<line x1="644.9" y1="307.7" x2="644.9" y2="309.7" stroke="#555" stroke-width="0.7"/>
<text x="644.9" y="320.0" text-anchor="middle" font-size="8" fill="#4d4d4d">1900</text>
<line x1="672.4" y1="307.7" x2="672.4" y2="309.7" stroke="#555" stroke-width="0.7"/>
<text x="672.4" y="320.0" text-anchor="middle" font-size="8" fill="#4d4d4d">1950</text>
<line x1="699.9" y1="307.7" x2="699.9" y2="309.7" stroke="#555" stroke-width="0.7"/>
<text x="699.9" y="320.0" text-anchor="middle" font-size="8" fill="#4d4d4d">2000</text>
<!-- modebar -->
<g>
<rect x="648.5" y="76" width="157" height="11" fill="#fff" opacity=".62"/>
<!-- camera -->
<path d="M652.3,79.4 h1.6 l0.7,-1 h2.6 l0.7,1 h1.6 v5 h-7.2z" fill="#dcdcdc"/><circle cx="655.9" cy="81.9" r="1.5" fill="#fff"/>
<!-- zoom (active) -->
<circle cx="671" cy="80.4" r="2.7" fill="none" stroke="#555" stroke-width="1.2"/><path d="M673,82.6 l2.3,2.3" stroke="#555" stroke-width="1.4" fill="none"/>
<path d="M669.7,80.4 h2.6 M671,79.1 v2.6" stroke="#555" stroke-width=".7"/>
<!-- pan -->
<path d="M685,77.6 v7.4 M681.3,81.3 h7.4" stroke="#d0d0d0" stroke-width="1" fill="none"/>
<path d="M685,76.8 l1.2,1.4 h-2.4z M685,85.8 l1.2,-1.4 h-2.4z M680.5,81.3 l1.4,-1.2 v2.4z M689.5,81.3 l-1.4,-1.2 v2.4z" fill="#d0d0d0"/>
<!-- zoom in -->
<rect x="698" y="78" width="6.6" height="6.6" rx=".8" fill="#d0d0d0"/><path d="M699.6,81.3 h3.4 M701.3,79.6 v3.4" stroke="#fff" stroke-width="1"/>
<!-- zoom out -->
<rect x="710.5" y="78" width="6.6" height="6.6" rx=".8" fill="#d0d0d0"/><path d="M712.1,81.3 h3.4" stroke="#fff" stroke-width="1"/>
<!-- autoscale -->
<path d="M723.6,78.2 l6.2,6.2 M729.8,78.2 l-6.2,6.2" stroke="#d0d0d0" stroke-width="1"/>
<path d="M723,77.6 h2.2 l-2.2,2.2z M730.4,77.6 v2.2 l-2.2,-2.2z M723,85 v-2.2 l2.2,2.2z M730.4,85 h-2.2 l2.2,-2.2z" fill="#d0d0d0"/>
<!-- home -->
<path d="M739.5,77.8 l4,3.4 h-1.1 v3.4 h-2 v-2 h-1.8 v2 h-2 v-3.4 h-1.1z" fill="#d0d0d0"/>
<!-- spikes -->
<path d="M757.6,77.6 v6.8 M753,79.8 h4.6" stroke="#d8d8d8" stroke-width=".9" stroke-dasharray="1.2,.8" fill="none"/>
<!-- closest (active) -->
<path d="M765.8,81.3 l2,-2.3 h5 v4.6 h-5z" fill="#555"/>
<!-- compare -->
<path d="M778.2,78 h7.4 v2.3 h-7.4z M778.2,82.2 h7.4 v2.3 h-7.4z" fill="#d0d0d0"/>
<!-- plotly -->
<rect x="794.8" y="77.4" width="7.6" height="7.8" rx=".8" fill="#3c5d94"/>
<path d="M796.4,80 v3.4 M798,81.4 v2 M799.6,80 v3.4 M801,81.4 v2" stroke="#fff" stroke-width=".8"/>
</g>


<!-- video -->
<g clip-path="url(#cVid)">
<rect x="247" y="386" width="475" height="148" fill="#fff"/>
<rect x="268" y="413" width="394" height="121" fill="#F1736B"/>
<g clip-path="url(#cMap)">
<!-- USA blue -->
<path d="M268,434.3 C272,432.5 280,430 290,427 C300,424.6 320,422.3 340,421.4 C360,420.4 395,420.6 405,422.5 C413,424 417,426 419.6,428 C426,433 431,438 434,443.8 C437,449 439.5,455 441.3,460.7 L448.6,480 L455.8,501.8 L461.9,521 L466.5,534 L268,534 Z" fill="#00B2EE"/>
<!-- yellow strip -->
<path d="M268,439.5 C270.5,442 273,455 274.5,470 C275.8,490 275.8,510 275,534 L268,534 Z" fill="#FFFF66"/>
<!-- China yellow -->
<path d="M662,434 L630,434.2 L599,434.2 C593,434.6 589,435.4 584.6,436.6 C580,438 576,440 572.5,442.6 C569,445 566,447.5 564,449.9 C562,452.5 560.5,454.5 559.2,457.1 C557.5,460 556.6,463 556,465.6 L557,517 L550.8,520.6 L549.6,526 L550,534 L662,534 Z" fill="#FFFF66"/>
<!-- India orange -->
<ellipse cx="546.4" cy="493.3" rx="19" ry="27.8" fill="#F59331"/>
<!-- Japan green -->
<ellipse cx="627.6" cy="476.4" rx="19.3" ry="16" fill="#4DAC11"/>
<!-- Brazil green -->
<ellipse cx="420.8" cy="537" rx="19.3" ry="16" fill="#0E8A3A"/>
<!-- purple UK -->
<polygon points="435.3,448.6 444.5,445 459,443.8 468.6,446.2 471.5,451 468.6,455.9 463.8,459.5 459,464.3 454.2,470.4 449.3,475.2 443.3,469.2 438.5,462 435.3,454.7" fill="#A960F2"/>
<polygon points="460.2,459.5 466.2,457.1 471,458.3 472.3,464.3 467.4,468 462.6,465.6" fill="#99FF99"/>
<circle cx="515.2" cy="485" r="3" fill="#0E8A3A"/>
<circle cx="455.4" cy="469.9" r="4.3" fill="#c4c4c4"/>
<circle cx="463.8" cy="474" r="3.4" fill="#c4c4c4"/>
<circle cx="485.6" cy="455.4" r="3.6" fill="#c4c4c4"/>
<circle cx="500" cy="469.2" r="4.3" fill="#c4c4c4"/>
<circle cx="497.6" cy="481.3" r="4.8" fill="#c4c4c4"/>
<circle cx="521.3" cy="474" r="5.3" fill="#c4c4c4"/>
<circle cx="542.3" cy="473.3" r="3.6" fill="#c4c4c4"/>
<circle cx="507.3" cy="501.8" r="5.3" fill="#c4c4c4"/>
<circle cx="579.8" cy="526" r="18" fill="#c4c4c4"/>
<circle cx="579.8" cy="499.4" r="6" fill="#c4c4c4"/>
<circle cx="597.9" cy="495.7" r="4.8" fill="#c4c4c4"/>
<circle cx="599" cy="485.4" r="3.6" fill="#c4c4c4"/>
<circle cx="482" cy="518.7" r="3.6" fill="#c4c4c4"/>
<circle cx="494" cy="528.4" r="4.3" fill="#c4c4c4"/>
<circle cx="513.3" cy="506.6" r="2.9" fill="#c4c4c4"/>
<circle cx="355.6" cy="491.6" r="5" fill="#c4c4c4"/>
<circle cx="391.8" cy="500.6" r="5.5" fill="#c4c4c4"/>
<circle cx="384.6" cy="506.6" r="5" fill="#c4c4c4"/>
<circle cx="380.5" cy="524.7" r="5" fill="#c4c4c4"/>
<circle cx="382.6" cy="461.4" r="2.5" fill="#c4c4c4"/>
<circle cx="390.6" cy="529.6" r="3" fill="#c4c4c4"/>
<circle cx="471" cy="506" r="4" fill="#c4c4c4"/>
<polyline fill="none" stroke="#000" stroke-width="0.6" stroke-linejoin="round" points="267.9,434.2 272.2,437.8 278.3,440.2 275.9,442.6 281.9,443.8 286.7,442.6 283.1,446.2 289.2,448.6 279.5,452.3 272.2,454.7 284.3,452.3 294.0,449.9 301.2,446.2 307.3,445.7 313.3,447.4 319.3,451.1 324.2,454.7 329.0,458.3 330.2,464.3 332.6,470.4 337.5,476.4 341.8,481.3 344.7,485.4 342.8,480.0 347.1,483.7 350.7,488.5 355.6,492.1 360.4,494.5 365.2,495.7 368.9,498.2 372.5,501.8 376.1,503.0 378.5,501.3 383.4,503.0 385.8,505.4 380.9,509.0 377.3,513.9 378.5,518.7 383.4,523.5 385.8,528.4 390.6,530.8 395.4,532.9"/>
<polyline fill="none" stroke="#000" stroke-width="0.6" stroke-linejoin="round" points="267.9,434.2 274.7,431.7 284.3,435.4 294.0,434.2 303.6,435.4 310.9,436.1 320.6,435.4 327.8,434.2 331.4,430.5 337.5,429.3 344.7,426.9 354.4,425.7 361.6,424.5 371.3,423.3 380.9,422.1 390.6,421.6 397.4,421.6 393.0,424.5 385.8,428.1 390.6,430.5 395.4,432.9 397.4,439.0 393.0,442.6 388.2,446.2 390.6,449.9 396.6,452.3 402.7,454.7 406.3,459.5 400.3,458.3 395.4,461.9 390.6,464.3 385.8,466.8 382.1,470.4 379.7,475.2 376.1,478.8 377.3,482.5 374.9,480.0 371.3,480.0 366.4,480.0 361.6,480.5 359.2,484.9 360.4,489.7 364.0,492.1 368.9,490.9 371.3,493.3 368.9,498.2"/>
<polyline fill="none" stroke="#000" stroke-width="0.6" stroke-linejoin="round" points="361.6,446.2 366.4,442.6 373.7,441.4 378.5,443.8 380.9,448.6 377.3,452.3 378.5,455.9 374.9,453.5 371.3,451.1 366.4,451.1 361.6,446.2"/>
<polyline fill="none" stroke="#000" stroke-width="0.6" stroke-linejoin="round" points="330.2,432.9 335.0,430.5 342.3,431.7 347.1,429.3 352.0,431.7 358.0,429.3 361.6,432.9 368.9,430.5 373.7,434.2 378.5,431.7 383.4,435.4 388.2,432.9 393.0,436.6"/>
<polyline fill="none" stroke="#000" stroke-width="0.6" stroke-linejoin="round" points="337.5,426.9 344.7,424.5 352.0,426.9 359.2,425.0 366.4,427.4 373.7,425.0 380.9,426.9 388.2,424.5 395.4,423.3"/>
<polyline fill="none" stroke="#000" stroke-width="0.6" stroke-linejoin="round" points="356.8,436.6 361.6,439.0 368.9,436.6 373.7,439.0 380.9,437.8 385.8,440.2 391.8,439.0"/>
<polyline fill="none" stroke="#000" stroke-width="0.6" stroke-linejoin="round" points="344.7,428.1 348.3,432.9 345.9,435.4 350.7,434.2"/>
<polyline fill="none" stroke="#000" stroke-width="0.6" stroke-linejoin="round" points="366.4,424.5 370.1,429.3 367.7,432.9 372.5,431.7"/>
<polyline fill="none" stroke="#000" stroke-width="0.6" stroke-linejoin="round" points="378.5,423.3 382.1,428.1 379.7,431.7 384.6,430.5 387.0,425.7"/>
<polyline fill="none" stroke="#000" stroke-width="0.6" stroke-linejoin="round" points="310.9,436.1 310.9,446.2"/>
<polyline fill="none" stroke="#000" stroke-width="0.6" stroke-linejoin="round" points="329.0,458.3 371.3,458.3 374.9,461.9 380.9,464.3 385.8,461.9 390.6,460.7 395.4,459.5"/>
<polyline fill="none" stroke="#000" stroke-width="0.6" stroke-linejoin="round" points="337.5,476.4 344.7,477.6 350.7,481.3 356.8,482.5 359.2,484.9"/>
<polyline fill="none" stroke="#000" stroke-width="0.6" stroke-linejoin="round" points="371.3,487.3 378.5,486.8 383.4,489.2 388.2,490.9"/>
<polyline fill="none" stroke="#000" stroke-width="0.6" stroke-linejoin="round" points="384.6,492.1 390.6,492.6 395.4,494.1"/>
<polyline fill="none" stroke="#000" stroke-width="0.6" stroke-linejoin="round" points="377.3,513.9 380.9,511.4 385.8,510.2 390.6,509.0 396.6,507.8 401.5,506.6 406.3,509.0 409.9,512.7 414.8,513.9 419.6,516.3 424.4,519.9 429.3,523.5"/>
<polyline fill="none" stroke="#000" stroke-width="0.6" stroke-linejoin="round" points="385.8,510.2 388.2,516.3 385.8,521.1 390.6,525.9 388.2,530.8"/>
<polyline fill="none" stroke="#000" stroke-width="0.6" stroke-linejoin="round" points="396.6,507.8 397.9,513.9 402.7,517.5 407.5,516.3 409.9,512.7"/>
<polyline fill="none" stroke="#000" stroke-width="0.6" stroke-linejoin="round" points="402.7,517.5 405.1,523.5 402.7,528.4"/>
<polyline fill="none" stroke="#000" stroke-width="0.6" stroke-linejoin="round" points="419.6,516.3 422.0,523.5 423.2,530.8"/>
<polyline fill="none" stroke="#000" stroke-width="0.6" stroke-linejoin="round" points="438.9,440.9 442.5,439.5 448.6,440.0 449.8,441.4 445.0,442.6 440.1,442.1 438.9,440.9"/>
<polyline fill="none" stroke="#000" stroke-width="0.6" stroke-linejoin="round" points="289.2,487.8 292.8,489.2 295.9,490.9"/>
<polyline fill="none" stroke="#000" stroke-width="0.6" stroke-linejoin="round" points="472.3,446.2 475.9,440.2 481.9,436.1 489.2,434.2 495.2,435.4 492.8,440.2 489.2,443.8 486.8,448.6 490.4,446.2 494.0,441.4 498.8,439.0 502.5,441.4 509.7,439.0 517.0,435.4 521.8,431.7 526.6,430.5 533.9,429.3 537.5,428.1 539.9,432.9 545.9,432.9 550.8,430.5 555.6,431.7 560.4,429.3 565.3,428.1 572.5,427.4 579.8,426.9 587.0,430.5 594.3,429.3 601.5,431.7 608.7,430.5 616.0,432.9 623.2,431.7 632.9,434.2 647.4,432.9 661.9,435.4"/>
<polyline fill="none" stroke="#000" stroke-width="0.6" stroke-linejoin="round" points="472.3,446.2 469.9,451.1 466.2,454.7 461.4,458.3 459.0,461.9 455.4,466.8 454.2,471.6 459.0,472.8 463.8,470.4 468.6,468.0 473.5,466.8 477.1,470.4 480.7,472.8 483.1,469.2 486.8,471.6 490.4,474.0 494.0,470.4 497.6,469.2 502.5,468.0 507.3,466.8 512.1,468.0 515.7,465.6"/>
<polyline fill="none" stroke="#000" stroke-width="0.6" stroke-linejoin="round" points="448.1,478.8 452.9,475.2 459.0,474.0 466.2,473.3 473.5,474.7 478.3,477.6 484.3,478.8 490.4,477.6 496.4,478.8 500.0,477.6 503.7,482.5 507.3,489.7 510.9,495.7 514.5,500.6 518.2,498.2 521.8,495.7"/>
<polyline fill="none" stroke="#000" stroke-width="0.6" stroke-linejoin="round" points="448.1,478.8 445.7,484.9 444.5,492.1 446.9,498.2 450.5,503.0 455.4,506.6 461.4,509.0 468.6,509.0 474.7,507.8 478.3,511.4 479.5,518.7 478.3,525.9 480.7,532.9"/>
<polyline fill="none" stroke="#000" stroke-width="0.6" stroke-linejoin="round" points="521.8,495.7 517.0,504.2 512.1,511.4 508.5,518.7 507.3,525.9 506.1,532.9"/>
<polyline fill="none" stroke="#000" stroke-width="0.6" stroke-linejoin="round" points="452.9,475.2 459.0,482.5 457.8,492.1 450.5,503.0"/>
<polyline fill="none" stroke="#000" stroke-width="0.6" stroke-linejoin="round" points="459.0,482.5 473.5,487.3 483.1,487.3 484.3,478.8"/>
<polyline fill="none" stroke="#000" stroke-width="0.6" stroke-linejoin="round" points="473.5,487.3 474.7,507.8"/>
<polyline fill="none" stroke="#000" stroke-width="0.6" stroke-linejoin="round" points="483.1,487.3 492.8,489.7 500.0,489.7 503.7,482.5"/>
<polyline fill="none" stroke="#000" stroke-width="0.6" stroke-linejoin="round" points="492.8,489.7 494.0,501.8 488.0,506.6 478.3,511.4"/>
<polyline fill="none" stroke="#000" stroke-width="0.6" stroke-linejoin="round" points="494.0,501.8 504.9,504.2 512.1,511.4"/>
<polyline fill="none" stroke="#000" stroke-width="0.6" stroke-linejoin="round" points="488.0,506.6 490.4,518.7 479.5,518.7"/>
<polyline fill="none" stroke="#000" stroke-width="0.6" stroke-linejoin="round" points="490.4,518.7 502.5,521.1 508.5,518.7"/>
<polyline fill="none" stroke="#000" stroke-width="0.6" stroke-linejoin="round" points="490.4,518.7 492.8,532.9"/>
<polyline fill="none" stroke="#000" stroke-width="0.6" stroke-linejoin="round" points="457.8,492.1 466.2,493.3 473.5,497.0"/>
<polyline fill="none" stroke="#000" stroke-width="0.6" stroke-linejoin="round" points="455.4,506.6 461.4,501.8 466.2,493.3"/>
<polyline fill="none" stroke="#000" stroke-width="0.6" stroke-linejoin="round" points="503.7,482.5 509.7,480.0 517.0,482.5 523.0,487.3 526.6,490.9 521.8,495.7 514.5,500.6"/>
<polyline fill="none" stroke="#000" stroke-width="0.6" stroke-linejoin="round" points="509.7,480.0 513.3,475.2 517.0,472.8 521.8,476.4 526.6,480.0 530.2,482.5 526.6,490.9"/>
<polyline fill="none" stroke="#000" stroke-width="0.6" stroke-linejoin="round" points="490.4,474.0 497.6,473.3 502.5,471.6"/>
<polyline fill="none" stroke="#000" stroke-width="0.6" stroke-linejoin="round" points="512.1,468.0 514.5,471.6 513.3,475.2"/>
<polyline fill="none" stroke="#000" stroke-width="0.6" stroke-linejoin="round" points="530.2,482.5 535.1,484.9 538.7,487.3 542.3,493.3 545.9,499.4 549.6,503.0 552.0,505.4 553.2,501.8 554.4,495.7 556.8,489.7 560.4,486.1 564.1,484.9 566.5,488.5 568.9,492.1"/>
<polyline fill="none" stroke="#000" stroke-width="0.6" stroke-linejoin="round" points="568.9,492.1 571.3,497.0 573.7,501.8 576.1,506.6 577.3,501.8 574.9,495.7 577.3,492.1 581.0,494.5 584.6,493.3 587.0,489.7 584.6,486.1 588.2,482.5 591.8,480.0 596.7,476.4 599.1,471.6 596.7,468.0 600.3,465.6 603.9,469.2 606.3,472.8 610.0,470.4 608.7,466.8 612.4,463.1 616.0,458.3 617.2,453.5 620.8,449.9 625.7,447.4 630.0,446.2 635.3,441.4 642.6,439.0 647.4,432.9"/>
<polyline fill="none" stroke="#000" stroke-width="0.6" stroke-linejoin="round" points="515.7,465.6 519.4,460.7 524.2,457.1 531.4,453.5 538.7,452.3 545.9,453.5 553.2,455.9 555.6,460.7 561.6,461.9 565.3,458.3 572.5,457.1 579.8,458.3 587.0,459.5 594.3,460.7 599.1,457.1 603.9,454.7 611.2,454.7 616.0,458.3"/>
<polyline fill="none" stroke="#000" stroke-width="0.6" stroke-linejoin="round" points="565.3,458.3 568.9,454.7 574.9,453.0 582.2,454.0 589.4,455.9 594.3,460.7"/>
<polyline fill="none" stroke="#000" stroke-width="0.6" stroke-linejoin="round" points="535.1,484.9 537.5,478.8 542.3,475.2 545.9,471.6 550.8,472.8 555.6,476.4 561.6,478.8 566.5,480.0 570.1,482.5 568.9,492.1"/>
<polyline fill="none" stroke="#000" stroke-width="0.6" stroke-linejoin="round" points="515.7,465.6 518.2,458.3 523.0,454.7 531.4,453.0"/>
<polyline fill="none" stroke="#000" stroke-width="0.6" stroke-linejoin="round" points="478.3,453.5 481.9,457.1 486.8,455.9 490.4,458.3 495.2,457.1 498.8,460.7 502.5,468.0"/>
<polyline fill="none" stroke="#000" stroke-width="0.6" stroke-linejoin="round" points="475.9,458.3 479.5,461.9 484.3,460.7 488.0,464.3 486.8,471.6"/>
<polyline fill="none" stroke="#000" stroke-width="0.6" stroke-linejoin="round" points="466.2,454.7 471.1,457.1 475.9,458.3 478.3,453.5 475.9,448.6 472.3,446.2"/>
<polyline fill="none" stroke="#000" stroke-width="0.6" stroke-linejoin="round" points="491.6,460.7 496.4,463.1 500.0,461.9 504.9,464.3 507.3,466.8"/>
<polyline fill="none" stroke="#000" stroke-width="0.6" stroke-linejoin="round" points="610.0,475.2 612.4,471.6 616.0,468.0 619.6,464.3 622.0,459.5 623.2,455.9 620.8,460.7 617.9,466.0 614.8,470.4 611.2,474.7 610.0,475.2"/>
<polyline fill="none" stroke="#000" stroke-width="0.6" stroke-linejoin="round" points="596.7,494.5 599.1,498.2 601.5,503.0 599.1,500.6 596.7,497.0 596.7,494.5"/>
<polyline fill="none" stroke="#000" stroke-width="0.6" stroke-linejoin="round" points="574.9,511.4 579.8,515.1 584.6,518.7 589.4,521.1"/>
<polyline fill="none" stroke="#000" stroke-width="0.6" stroke-linejoin="round" points="589.4,513.9 594.3,512.7 596.7,516.3 593.0,518.7 589.4,517.5 589.4,513.9"/>
<polyline fill="none" stroke="#000" stroke-width="0.6" stroke-linejoin="round" points="603.9,516.3 608.7,515.1 611.2,518.7 606.3,519.2 603.9,516.3"/>
<polyline fill="none" stroke="#000" stroke-width="0.6" stroke-linejoin="round" points="618.4,516.3 623.2,518.7 630.0,519.9 637.7,518.7"/>
<polyline fill="none" stroke="#000" stroke-width="0.6" stroke-linejoin="round" points="616.0,532.9 620.8,525.9 625.7,528.4 630.5,525.5 635.3,528.4 640.1,525.9"/>
<polyline fill="none" stroke="#000" stroke-width="0.6" stroke-linejoin="round" points="437.2,440.2 440.9,439.0 444.5,439.5 445.7,441.4 441.6,442.4 437.7,441.9 437.2,440.2"/>
<polyline fill="none" stroke="#000" stroke-width="0.6" stroke-linejoin="round" points="456.6,452.3 459.0,448.6 461.4,446.2 462.6,449.9 465.0,453.5 461.4,455.9 458.5,455.4 456.6,452.3"/>
<polyline fill="none" stroke="#000" stroke-width="0.6" stroke-linejoin="round" points="452.9,453.5 455.4,451.5 456.1,454.7 453.7,455.9 452.9,453.5"/>
<polyline fill="none" stroke="#000" stroke-width="0.6" stroke-linejoin="round" points="509.7,532.9 513.3,527.1 515.7,529.6 513.3,532.9"/><polyline fill="none" stroke="#000" stroke-width="0.55" stroke-linejoin="round" points="354.6,423.8 358.1,425.7 354.5,429.0 350.5,426.3 351.4,424.2 354.6,423.8"/>
<polyline fill="none" stroke="#000" stroke-width="0.55" stroke-linejoin="round" points="360.8,425.9 362.5,427.6 360.3,430.0 354.6,428.8 356.6,425.4 360.8,425.9"/>
<polyline fill="none" stroke="#000" stroke-width="0.55" stroke-linejoin="round" points="357.9,444.2 357.0,443.7 357.1,442.8 358.8,442.1 359.4,443.3 359.6,444.3 357.9,444.2"/>
<polyline fill="none" stroke="#000" stroke-width="0.55" stroke-linejoin="round" points="370.1,429.1 374.5,427.8 378.1,429.6 376.7,432.8 371.6,432.0 370.1,429.1"/>
<polyline fill="none" stroke="#000" stroke-width="0.55" stroke-linejoin="round" points="392.3,428.8 394.8,428.6 395.6,430.3 394.1,432.0 390.8,431.4 390.8,429.7 392.3,428.8"/>
<polyline fill="none" stroke="#000" stroke-width="0.55" stroke-linejoin="round" points="398.6,426.3 396.1,425.8 393.1,425.5 393.0,423.3 396.1,422.4 399.7,422.5 399.5,424.7 398.6,426.3"/>
<polyline fill="none" stroke="#000" stroke-width="0.55" stroke-linejoin="round" points="380.2,435.7 379.0,436.9 375.9,437.8 375.6,435.6 373.4,433.8 376.7,433.1 379.7,432.6 382.4,434.1 380.2,435.7"/>
<polyline fill="none" stroke="#000" stroke-width="0.55" stroke-linejoin="round" points="366.6,438.2 363.3,439.8 360.1,439.8 358.3,438.4 355.8,435.5 361.1,435.6 364.4,436.0 366.6,438.2"/>
<polyline fill="none" stroke="#000" stroke-width="0.55" stroke-linejoin="round" points="356.5,441.7 356.5,441.0 356.7,440.3 358.1,439.9 359.7,440.3 360.6,441.5 359.1,442.3 357.5,442.2 356.5,441.7"/>
<polyline fill="none" stroke="#000" stroke-width="0.55" stroke-linejoin="round" points="350.2,424.0 347.9,424.7 346.2,424.7 345.7,423.8 346.2,422.5 348.6,422.6 350.2,424.0"/>
<polyline fill="none" stroke="#000" stroke-width="0.55" stroke-linejoin="round" points="349.4,421.5 353.5,421.6 358.1,421.7 360.5,424.4 358.0,427.0 354.4,428.1 350.9,427.4 348.7,426.0 348.0,423.9 349.4,421.5"/>
<polyline fill="none" stroke="#000" stroke-width="0.55" stroke-linejoin="round" points="361.0,428.8 357.6,428.3 355.7,427.2 354.6,425.6 356.5,424.2 359.6,423.1 361.3,425.1 366.0,427.3 361.0,428.8"/>
<polyline fill="none" stroke="#000" stroke-width="0.55" stroke-linejoin="round" points="370.4,424.3 372.5,424.2 374.6,424.2 376.3,425.7 373.8,426.7 371.6,426.5 370.8,425.6 370.4,424.3"/>
<polyline fill="none" stroke="#000" stroke-width="0.55" stroke-linejoin="round" points="378.8,438.1 379.4,435.4 383.4,436.7 385.8,438.6 383.5,441.1 378.8,440.5 378.8,438.1"/>
<polyline fill="none" stroke="#000" stroke-width="0.55" stroke-linejoin="round" points="349.0,436.0 350.8,435.2 352.2,435.3 353.6,435.7 353.4,436.8 351.9,437.5 350.1,437.1 349.0,436.0"/>
<polyline fill="none" stroke="#000" stroke-width="0.55" stroke-linejoin="round" points="385.3,437.0 385.9,438.6 385.5,439.9 383.2,439.9 382.6,438.8 383.2,438.0 385.3,437.0"/>
<polyline fill="none" stroke="#000" stroke-width="0.55" stroke-linejoin="round" points="478.7,446.9 479.1,444.0 483.1,442.5 486.1,444.4 486.6,446.1 485.3,447.4 482.8,447.5 478.7,446.9"/>
<polyline fill="none" stroke="#000" stroke-width="0.55" stroke-linejoin="round" points="475.5,460.1 478.1,456.5 482.6,458.5 485.1,461.2 479.5,463.5 475.5,460.1"/>
<polyline fill="none" stroke="#000" stroke-width="0.55" stroke-linejoin="round" points="501.6,465.4 503.3,463.8 505.3,461.8 508.3,463.6 507.3,465.6 504.4,466.9 501.6,465.4"/>
<polyline fill="none" stroke="#000" stroke-width="0.55" stroke-linejoin="round" points="479.4,445.3 471.9,445.1 472.5,441.4 475.6,438.2 482.1,440.8 479.4,445.3"/>
<polyline fill="none" stroke="#000" stroke-width="0.55" stroke-linejoin="round" points="503.9,449.7 501.1,451.6 498.3,450.4 495.5,449.0 498.7,448.0 502.6,446.9 503.9,449.7"/>
<polyline fill="none" stroke="#000" stroke-width="0.55" stroke-linejoin="round" points="479.8,470.0 478.4,469.5 479.3,468.6 480.6,468.3 481.3,469.0 481.8,470.2 479.8,470.0"/>
<polyline fill="none" stroke="#000" stroke-width="0.55" stroke-linejoin="round" points="482.6,454.8 483.4,453.0 484.6,451.7 486.9,451.2 488.2,452.5 490.1,453.1 489.0,454.2 487.5,454.5 485.2,456.0 482.6,454.8"/>
<polyline fill="none" stroke="#000" stroke-width="0.55" stroke-linejoin="round" points="483.5,455.1 481.1,456.2 478.4,456.3 475.3,455.9 473.9,453.9 477.5,453.0 478.9,452.3 480.5,452.8 481.6,453.5 483.5,455.1"/>
<polyline fill="none" stroke="#000" stroke-width="0.55" stroke-linejoin="round" points="486.4,438.1 488.2,434.9 493.5,434.7 496.1,437.9 491.2,439.7 486.4,438.1"/>
<polyline fill="none" stroke="#000" stroke-width="0.55" stroke-linejoin="round" points="499.0,451.4 498.0,454.0 498.4,455.9 496.0,458.0 491.8,457.5 491.6,455.0 491.5,453.7 491.9,451.9 494.7,452.4 499.0,451.4"/>
<polyline fill="none" stroke="#000" stroke-width="0.55" stroke-linejoin="round" points="484.2,437.8 485.8,440.4 480.9,441.3 479.6,438.8 480.4,435.8 484.2,437.8"/>
<polyline fill="none" stroke="#000" stroke-width="0.55" stroke-linejoin="round" points="515.1,443.0 518.0,444.5 515.0,446.0 512.3,447.8 507.6,447.1 508.4,444.2 509.8,442.3 512.9,441.8 515.1,443.0"/>
<polyline fill="none" stroke="#000" stroke-width="0.55" stroke-linejoin="round" points="474.5,450.2 473.8,449.3 474.8,448.2 477.0,448.4 477.4,449.5 479.4,450.9 477.1,451.9 474.3,452.1 474.5,450.2"/>
<polyline fill="none" stroke="#000" stroke-width="0.55" stroke-linejoin="round" points="476.3,446.8 474.9,446.5 474.5,445.2 476.7,444.7 477.7,445.8 477.3,446.5 476.3,446.8"/>
<polyline fill="none" stroke="#000" stroke-width="0.55" stroke-linejoin="round" points="509.7,460.7 507.9,457.9 508.3,454.8 512.8,456.4 512.5,458.3 509.7,460.7"/>
<polyline fill="none" stroke="#000" stroke-width="0.55" stroke-linejoin="round" points="480.1,447.1 476.1,448.0 473.3,447.0 472.3,445.0 475.2,442.9 478.0,444.9 480.1,447.1"/>
<polyline fill="none" stroke="#000" stroke-width="0.55" stroke-linejoin="round" points="479.3,455.8 478.3,456.9 475.2,457.5 475.0,455.3 477.7,454.5 479.3,455.8"/>
<polyline fill="none" stroke="#000" stroke-width="0.55" stroke-linejoin="round" points="479.4,454.0 477.7,453.1 479.2,452.0 481.4,450.2 484.1,451.7 483.2,453.6 481.7,455.1 479.4,454.0"/>
<polyline fill="none" stroke="#000" stroke-width="0.55" stroke-linejoin="round" points="508.8,437.8 512.4,436.6 516.3,438.0 514.7,440.5 513.0,441.6 510.6,442.0 508.7,441.1 505.6,439.4 508.8,437.8"/>
<polyline fill="none" stroke="#000" stroke-width="0.55" stroke-linejoin="round" points="504.0,439.9 507.8,442.1 503.2,445.3 498.5,442.4 500.7,440.0 504.0,439.9"/>
<polyline fill="none" stroke="#000" stroke-width="0.55" stroke-linejoin="round" points="496.8,449.1 499.8,449.3 501.7,449.5 502.5,450.7 500.8,451.4 498.8,452.1 497.3,450.9 496.8,449.1"/>
<polyline fill="none" stroke="#000" stroke-width="0.55" stroke-linejoin="round" points="513.6,449.0 512.4,449.0 512.3,448.3 512.5,447.6 513.8,447.1 514.6,448.0 515.3,448.9 513.6,449.0"/>
<polyline fill="none" stroke="#000" stroke-width="0.55" stroke-linejoin="round" points="583.9,526.4 583.7,527.1 582.6,527.2 581.1,527.3 580.5,526.4 580.6,525.3 582.1,524.8 583.8,524.8 585.3,525.5 583.9,526.4"/>
<polyline fill="none" stroke="#000" stroke-width="0.55" stroke-linejoin="round" points="606.9,517.0 604.7,514.2 603.0,510.6 609.5,509.7 613.2,512.5 611.8,515.5 606.9,517.0"/>
<polyline fill="none" stroke="#000" stroke-width="0.55" stroke-linejoin="round" points="628.7,516.5 633.4,516.6 636.1,514.6 639.8,515.9 640.6,518.4 639.7,521.2 635.1,521.6 632.8,519.7 631.8,518.6 628.7,516.5"/>
<polyline fill="none" stroke="#000" stroke-width="0.55" stroke-linejoin="round" points="626.0,529.2 627.8,528.1 630.4,527.9 631.9,529.2 630.7,530.3 630.7,532.1 627.8,532.1 626.4,530.7 626.0,529.2"/>
<polyline fill="none" stroke="#000" stroke-width="0.55" stroke-linejoin="round" points="620.5,522.8 619.4,522.8 618.2,522.1 619.5,521.5 620.5,520.8 622.4,521.0 622.3,522.2 621.6,522.9 620.5,522.8"/>
<polyline fill="none" stroke="#000" stroke-width="0.55" stroke-linejoin="round" points="613.5,521.3 615.5,519.8 618.0,520.9 620.7,522.1 620.4,524.3 617.6,525.6 614.8,524.5 612.0,524.2 611.3,522.4 613.5,521.3"/>
<polyline fill="none" stroke="#000" stroke-width="0.55" stroke-linejoin="round" points="657.0,509.1 655.6,508.3 655.4,507.2 656.9,506.7 658.5,505.6 659.2,507.0 661.0,508.1 659.4,509.4 657.0,509.1"/>
<polyline fill="none" stroke="#000" stroke-width="0.55" stroke-linejoin="round" points="580.7,516.8 581.2,519.6 576.8,520.9 574.5,518.2 573.5,517.0 572.3,514.5 576.3,514.7 579.3,515.1 580.7,516.8"/>
<polyline fill="none" stroke="#000" stroke-width="0.55" stroke-linejoin="round" points="625.7,520.2 629.3,520.1 628.4,522.4 625.8,522.3 624.8,521.4 625.7,520.2"/>
<polyline fill="none" stroke="#000" stroke-width="0.55" stroke-linejoin="round" points="614.7,517.5 615.2,516.2 616.8,515.3 618.8,516.0 618.8,517.4 616.8,518.3 614.7,517.5"/>
<polyline fill="none" stroke="#000" stroke-width="0.55" stroke-linejoin="round" points="654.9,510.7 653.7,510.6 652.7,509.8 654.5,509.5 655.9,508.8 656.9,509.8 656.6,510.9 654.9,510.7"/>
<polyline fill="none" stroke="#000" stroke-width="0.55" stroke-linejoin="round" points="598.9,508.3 595.3,507.6 596.3,505.4 598.8,504.1 603.9,504.5 603.7,508.0 598.9,508.3"/>
<polyline fill="none" stroke="#000" stroke-width="0.55" stroke-linejoin="round" points="638.3,520.3 642.4,519.9 644.8,517.7 647.6,519.4 650.2,521.2 648.5,523.5 644.9,523.8 642.6,523.0 637.6,523.0 638.3,520.3"/>
<polyline fill="none" stroke="#000" stroke-width="0.55" stroke-linejoin="round" points="585.7,519.4 583.2,518.5 583.3,516.9 584.9,516.0 587.1,515.7 589.1,516.9 587.3,518.0 585.7,519.4"/>
<polyline fill="none" stroke="#000" stroke-width="0.55" stroke-linejoin="round" points="510.1,481.0 513.0,479.5 517.1,478.1 519.5,480.6 520.3,483.1 516.9,484.2 513.9,484.2 510.0,483.6 510.1,481.0"/>
<polyline fill="none" stroke="#000" stroke-width="0.55" stroke-linejoin="round" points="498.6,494.2 498.2,498.8 493.5,501.2 487.2,500.3 486.7,496.3 491.3,494.1 498.6,494.2"/>
<polyline fill="none" stroke="#000" stroke-width="0.55" stroke-linejoin="round" points="471.4,488.4 480.0,488.1 484.0,493.4 476.1,495.3 468.3,497.6 467.8,492.2 471.4,488.4"/>
<polyline fill="none" stroke="#000" stroke-width="0.55" stroke-linejoin="round" points="518.2,502.8 512.6,504.0 509.5,500.3 514.3,496.9 519.3,499.7 518.2,502.8"/>
<polyline fill="none" stroke="#000" stroke-width="0.55" stroke-linejoin="round" points="481.4,522.3 480.5,526.6 479.2,528.6 477.0,530.1 472.9,531.6 468.0,530.1 465.1,526.5 469.3,523.4 474.8,522.3 481.4,522.3"/>
<polyline fill="none" stroke="#000" stroke-width="0.55" stroke-linejoin="round" points="527.2,502.3 525.3,505.7 520.9,503.4 518.2,499.8 526.1,497.6 527.2,502.3"/>
<polyline fill="none" stroke="#000" stroke-width="0.55" stroke-linejoin="round" points="517.2,507.5 511.7,510.2 510.2,506.0 512.6,503.7 519.0,503.7 517.2,507.5"/>
<polyline fill="none" stroke="#000" stroke-width="0.55" stroke-linejoin="round" points="478.3,505.1 478.2,510.2 470.3,511.0 465.8,508.8 464.4,505.8 465.1,500.7 473.6,501.5 478.3,505.1"/>
<polyline fill="none" stroke="#000" stroke-width="0.55" stroke-linejoin="round" points="495.0,480.4 492.9,482.1 489.2,481.7 486.4,480.0 486.0,477.3 489.8,475.4 493.8,476.6 496.2,478.3 495.0,480.4"/>
<polyline fill="none" stroke="#000" stroke-width="0.55" stroke-linejoin="round" points="473.2,499.3 465.8,495.4 463.5,490.1 472.2,490.5 475.6,493.6 473.2,499.3"/>
<polyline fill="none" stroke="#000" stroke-width="0.55" stroke-linejoin="round" points="602.5,444.4 610.5,443.8 618.5,443.4 616.2,448.6 618.2,452.4 612.4,455.9 608.1,451.2 606.6,449.1 602.5,444.4"/>
<polyline fill="none" stroke="#000" stroke-width="0.55" stroke-linejoin="round" points="584.0,456.1 582.7,450.3 590.3,447.3 599.5,448.6 600.6,454.7 592.4,456.1 584.0,456.1"/>
<polyline fill="none" stroke="#000" stroke-width="0.55" stroke-linejoin="round" points="539.0,473.0 532.8,467.7 539.8,461.9 548.1,465.9 545.8,469.9 539.0,473.0"/>
<polyline fill="none" stroke="#000" stroke-width="0.55" stroke-linejoin="round" points="523.1,440.9 529.7,439.4 536.0,441.4 531.8,444.8 524.9,445.7 523.1,440.9"/>
<polyline fill="none" stroke="#000" stroke-width="0.55" stroke-linejoin="round" points="533.2,460.2 534.2,461.6 534.2,463.9 530.5,462.7 528.0,463.0 525.1,461.7 526.0,459.5 529.7,459.7 531.4,459.7 533.2,460.2"/>
<polyline fill="none" stroke="#000" stroke-width="0.55" stroke-linejoin="round" points="530.7,466.2 530.5,468.9 525.6,471.4 522.4,467.6 526.4,465.5 530.7,466.2"/>
<polyline fill="none" stroke="#000" stroke-width="0.55" stroke-linejoin="round" points="605.1,446.4 611.3,447.7 610.8,452.3 604.8,451.1 600.0,449.0 605.1,446.4"/>
<polyline fill="none" stroke="#000" stroke-width="0.55" stroke-linejoin="round" points="534.8,456.8 539.2,459.1 536.6,462.0 535.8,464.5 532.1,463.4 526.0,464.0 528.3,460.8 529.4,457.9 534.8,456.8"/>
<polyline fill="none" stroke="#000" stroke-width="0.55" stroke-linejoin="round" points="531.8,451.7 533.3,447.3 533.8,444.8 537.4,441.2 542.1,444.2 542.9,446.8 541.6,448.9 538.8,452.1 531.8,451.7"/>
<polyline fill="none" stroke="#000" stroke-width="0.55" stroke-linejoin="round" points="558.6,472.4 554.2,470.1 555.0,465.2 565.3,465.0 566.0,471.3 558.6,472.4"/>
<polyline fill="none" stroke="#000" stroke-width="0.55" stroke-linejoin="round" points="397.8,506.1 402.6,508.3 400.6,511.0 398.0,513.9 394.5,511.2 393.4,508.5 397.8,506.1"/>
<polyline fill="none" stroke="#000" stroke-width="0.55" stroke-linejoin="round" points="406.4,522.9 404.1,522.8 401.4,521.3 404.7,520.4 406.6,520.7 407.8,521.7 406.4,522.9"/>
<polyline fill="none" stroke="#000" stroke-width="0.55" stroke-linejoin="round" points="394.4,510.3 400.4,512.4 403.1,514.9 398.4,517.9 392.3,515.1 394.4,510.3"/>
<polyline fill="none" stroke="#000" stroke-width="0.55" stroke-linejoin="round" points="438.8,497.2 435.3,499.2 433.0,496.9 434.1,495.4 437.3,494.7 438.8,497.2"/>
<polyline fill="none" stroke="#000" stroke-width="0.55" stroke-linejoin="round" points="399.5,519.0 392.7,520.2 390.7,516.6 393.5,513.9 397.8,515.4 399.5,519.0"/>
<polyline fill="none" stroke="#000" stroke-width="0.55" stroke-linejoin="round" points="398.6,500.7 400.5,503.9 398.7,506.2 394.2,507.1 393.3,504.4 394.6,502.8 398.6,500.7"/>
<polyline fill="none" stroke="#000" stroke-width="0.55" stroke-linejoin="round" points="410.9,511.0 413.2,510.0 416.1,511.0 415.7,512.9 413.9,514.0 410.9,515.8 408.4,513.8 408.8,511.9 410.9,511.0"/>
<polyline fill="none" stroke="#000" stroke-width="0.55" stroke-linejoin="round" points="381.0,524.3 379.5,520.5 385.2,519.1 388.9,519.3 394.0,519.6 392.0,522.5 389.5,523.6 385.7,526.7 381.0,524.3"/>
</g>
<!-- title text in video -->
<text x="464.7" y="397" font-size="8.7" fill="#000" text-anchor="middle" textLength="221" lengthAdjust="spacingAndGlyphs">Voronoi Diagram: Squared Haversine Distance to Capital</text>
<text x="465" y="408.4" font-size="6.9" fill="#000" text-anchor="middle" textLength="190.5" lengthAdjust="spacingAndGlyphs">weighted by Composite Index of National Capability in 1960</text>
<text transform="translate(264.2,512.3) rotate(-90)" font-size="7" fill="#000" text-anchor="middle">Latitude</text>
<!-- legend -->
<rect x="673" y="449.3" width="11" height="10.3" fill="#0000EE"/><text x="689" y="456.9" font-size="6.2" fill="#111">AUL</text>
<rect x="673" y="460.8" width="11" height="10.3" fill="#0E8A3A"/><text x="689" y="468.4" font-size="6.2" fill="#111">BRA</text>
<rect x="673" y="472.3" width="11" height="10.3" fill="#FFFF66"/><text x="689" y="479.9" font-size="6.2" fill="#111">CHN</text>
<rect x="673" y="483.8" width="11" height="10.3" fill="#99FF99"/><text x="689" y="491.4" font-size="6.2" fill="#111">FRN</text>
<rect x="673" y="495.3" width="11" height="10.3" fill="#C89010"/><text x="689" y="502.9" font-size="6.2" fill="#111">GMY</text>
<rect x="673" y="506.8" width="11" height="10.3" fill="#F59331"/><text x="689" y="514.4" font-size="6.2" fill="#111">IND</text>
<rect x="673" y="518.3" width="11" height="10.3" fill="#4DAC11"/><text x="689" y="525.9" font-size="6.2" fill="#111">JPN</text>
<rect x="673" y="529.8" width="11" height="10.3" fill="#F1736B"/><text x="689" y="537.4" font-size="6.2" fill="#111">RUS</text>
<!-- youtube gradient -->
<rect x="247" y="386" width="475" height="46" fill="url(#gYT)"/>
<circle cx="263.5" cy="402.8" r="10.4" fill="url(#gLogo2)"/>
<g fill="none" stroke="#fff" stroke-width="1" stroke-linecap="round">
<path d="M262.8,412.6 C263.5,406 263.5,400 260.3,393.5"/>
<path d="M263.3,405 C264.5,401 266.6,397 269.5,394.6"/>
<path d="M257.8,411.2 C258.8,406.5 257.5,401.5 254.3,398.8"/>
<path d="M268.2,411.6 C268.5,407 270.2,403.2 273.4,400.6"/>
</g>
<text x="279.1" y="406.3" font-size="10" fill="#f2f2f2" textLength="75.7" lengthAdjust="spacingAndGlyphs">Voronoi Quadratic</text>
<!-- watch later / share -->
<circle cx="655.3" cy="397.8" r="5.5" fill="#fff"/>
<path d="M655.3,394.6 v3.4 l2.2,1.4" fill="none" stroke="#777" stroke-width="1"/>
<text x="655.3" y="415" font-size="7.3" fill="#fff" text-anchor="middle" opacity=".85">Watch later</text>
<path d="M691.8,402.5 C692.3,398 695,396 698.3,395.8 V393 L703.3,397.6 L698.3,402.2 V399.4 C695.5,399.3 693.4,400.3 691.8,402.5Z" fill="#fff"/>
<text x="697.3" y="415" font-size="7.3" fill="#fff" text-anchor="middle" opacity=".7">Share</text>
<!-- play button -->
<rect x="466" y="493" width="35.5" height="23.5" rx="5.5" fill="#2a2a2a" opacity=".82"/>
<path d="M480,499.2 L489.4,504.7 L480,510.2Z" fill="#fff"/>
</g>

</svg>
</body></html>
